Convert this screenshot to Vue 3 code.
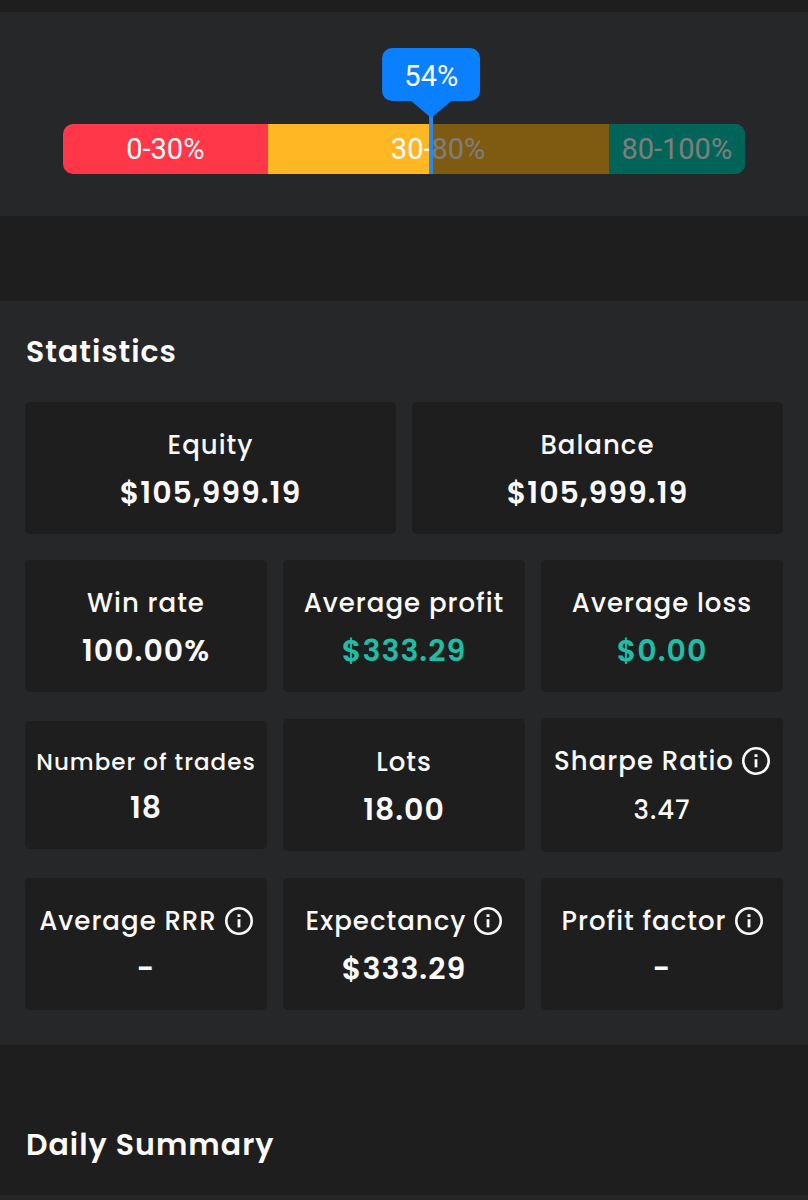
<script setup>
import { ref } from "vue";

const score = ref(54);

const ranges = [
  { label: "0-30%", size: 30, color: "red" },
  { label: "30-80%", size: 50, color: "yellow" },
  { label: "80-100%", size: 20, color: "green" },
];

const stats = [
  { label: "Equity", value: "$105,999.19", wide: true },
  { label: "Balance", value: "$105,999.19", wide: true },
  { label: "Win rate", value: "100.00%" },
  { label: "Average profit", value: "$333.29", positive: true },
  { label: "Average loss", value: "$0.00", positive: true },
  { label: "Number of trades", value: "18", compact: true },
  { label: "Lots", value: "18.00" },
  { label: "Sharpe Ratio", value: "3.47", info: true, light: true },
  { label: "Average RRR", value: "-", info: true },
  { label: "Expectancy", value: "$333.29", info: true },
  { label: "Profit factor", value: "-", info: true },
];
</script>

<template>
  <main class="page">
    <section class="score">
      <div class="gauge">
        <div class="ranges">
          <div
            v-for="range in ranges"
            :key="range.label"
            class="range"
            :class="range.color"
            :style="{ width: range.size + '%' }"
          >
            {{ range.label }}
          </div>
          <div class="remaining" :style="{ left: score + '%' }"></div>
        </div>
        <div class="marker" :style="{ left: score + '%' }">
          <div class="bubble">{{ score }}%</div>
          <div class="arrow"></div>
          <div class="needle"></div>
        </div>
      </div>
    </section>

    <section class="statistics">
      <h2 class="title">Statistics</h2>
      <div class="grid">
        <div
          v-for="stat in stats"
          :key="stat.label"
          class="card"
          :class="{ wide: stat.wide, compact: stat.compact, light: stat.light }"
        >
          <div class="label">
            <span>{{ stat.label }}</span>
            <button v-if="stat.info" type="button" class="info" :aria-label="'About ' + stat.label">
              <svg viewBox="0 0 28 28" fill="none" stroke="currentColor">
                <circle cx="14" cy="14" r="12.7" stroke-width="2.6" />
                <path d="M14 12.2V20.4" stroke-width="2.8" />
                <path d="M14 7.2V10" stroke-width="3" />
              </svg>
            </button>
          </div>
          <div class="value" :class="{ positive: stat.positive }">{{ stat.value }}</div>
        </div>
      </div>
    </section>

    <section class="summary">
      <h2 class="title">Daily Summary</h2>
    </section>
  </main>
</template>

<style>
body {
  margin: 0;
  background-color: #1e1e1e;
}
</style>

<style scoped>
.page {
  font-family: "Poppins", "Inter", sans-serif;
  letter-spacing: 1px;
  color: #fafafa;
  padding-top: 12px;
}

.score {
  background-color: #262729;
  padding: 112px 63px 42px;
}

.gauge {
  position: relative;
  font-family: "Roboto", sans-serif;
  font-size: 29px;
  letter-spacing: 0;
}

.ranges {
  position: relative;
  display: flex;
  height: 50px;
  border-radius: 10px;
  overflow: hidden;
}

.range {
  display: flex;
  align-items: center;
  justify-content: center;
  line-height: 52px;
  white-space: nowrap;
}

.red {
  background-color: #ff3748;
}

.yellow {
  background-color: #ffb724;
}

.green {
  background-color: #00cab0;
}

.remaining {
  position: absolute;
  top: 0;
  right: 0;
  bottom: 0;
  background-color: rgba(0, 0, 0, 0.5);
}

.marker {
  position: absolute;
  bottom: 0;
  display: flex;
  flex-direction: column;
  align-items: center;
  transform: translateX(-50%);
}

.bubble {
  padding: 4px 22px 0;
  line-height: 49px;
  border-radius: 10px;
  background-color: #0a80ff;
}

.arrow {
  width: 40px;
  height: 17px;
  background-color: #0a80ff;
  clip-path: polygon(0 0, 100% 0, 50% 100%);
}

.needle {
  width: 4px;
  height: 58px;
  margin-top: -2px;
  background-color: #2c87e8;
}

.statistics {
  margin-top: 85px;
  padding: 29px 25px 35px;
  background-color: #262729;
}

.title {
  margin: 0;
  padding-left: 1px;
  font-size: 30px;
  line-height: 44px;
  font-weight: 600;
}

.grid {
  display: grid;
  grid-template-columns: repeat(6, 1fr);
  align-items: center;
  gap: 26px 16px;
  margin-top: 28px;
}

.card {
  grid-column: span 2;
  display: flex;
  flex-direction: column;
  align-items: center;
  gap: 8px;
  padding: 23px 0 21px;
  border-radius: 5px;
  background-color: #1e1e1e;
  white-space: nowrap;
}

.wide {
  grid-column: span 3;
}

.label {
  display: flex;
  align-items: center;
  gap: 8px;
  font-size: 26px;
  line-height: 40px;
  font-weight: 500;
}

.value {
  font-size: 30px;
  line-height: 40px;
  font-weight: 600;
}

.compact .label {
  font-size: 23px;
  line-height: 36px;
}

.light .value {
  font-size: 26px;
  line-height: 42px;
  font-weight: 500;
}

.positive {
  color: #20bda5;
}

.info {
  display: flex;
  width: 28px;
  height: 28px;
  padding: 0;
  border: none;
  background: none;
  color: inherit;
  cursor: pointer;
}

.summary {
  padding: 78px 25px 28px;
  border-bottom: 5px solid #262626;
}
</style>
